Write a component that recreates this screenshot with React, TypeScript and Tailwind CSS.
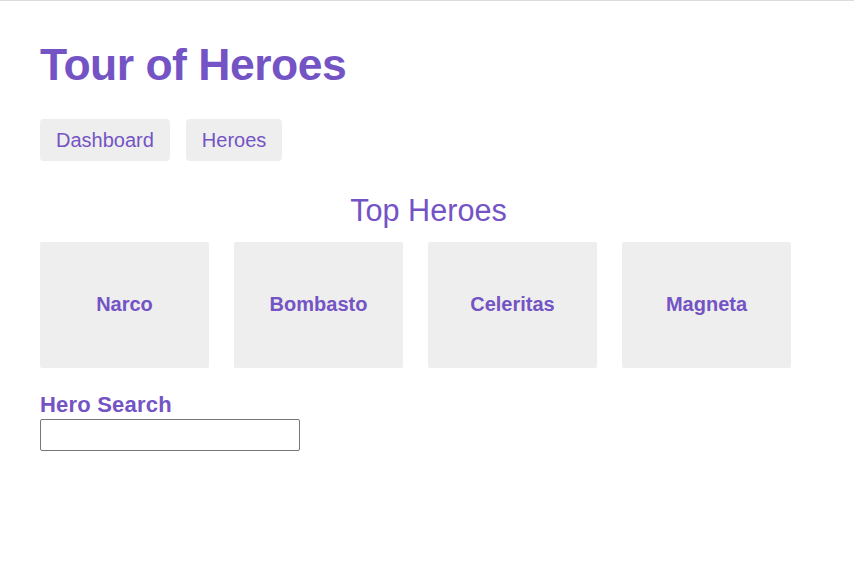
import React from "react";

const heroes = ["Narco", "Bombasto", "Celeritas", "Magneta"];

export default function App() {
  return (
    <div
      className="min-h-[572px] w-full bg-white border-t border-[#dcdcdc] text-[#7454c4]"
      style={{ fontFamily: '"Liberation Sans", Arial, sans-serif' }}
    >
      <div className="ml-10 pt-[36px] w-[777px]">
        <h1 className="text-[44.5px] leading-[56px] font-bold tracking-[-0.5px]">Tour of Heroes</h1>
        <nav className="flex gap-4 mt-[26px]">
          <a className="h-[42px] px-4 flex items-center rounded bg-[#eeeeee] text-[20px] leading-[23px]">
            Dashboard
          </a>
          <a className="h-[42px] px-4 flex items-center rounded bg-[#eeeeee] text-[20px] leading-[23px]">
            Heroes
          </a>
        </nav>
        <h2 className="mt-[31px] text-[30.6px] leading-[36px] text-center">Top Heroes</h2>
        <div className="flex gap-[25px] mt-[14px]">
          {heroes.map((h) => (
            <div
              key={h}
              className="shrink-0 w-[169px] h-[126px] pb-[2px] bg-[#eeeeee] rounded-[2px] flex items-center justify-center text-[20px] font-bold"
            >
              {h}
            </div>
          ))}
        </div>
        <h4 className="mt-[24px] text-[22px] leading-[26px] font-bold tracking-[0.2px]">Hero Search</h4>
        <input
          type="text"
          className="mt-[1px] block w-[260px] h-[32px] border border-[#767676] rounded-[2px] bg-white outline-none"
        />
      </div>
    </div>
  );
}
